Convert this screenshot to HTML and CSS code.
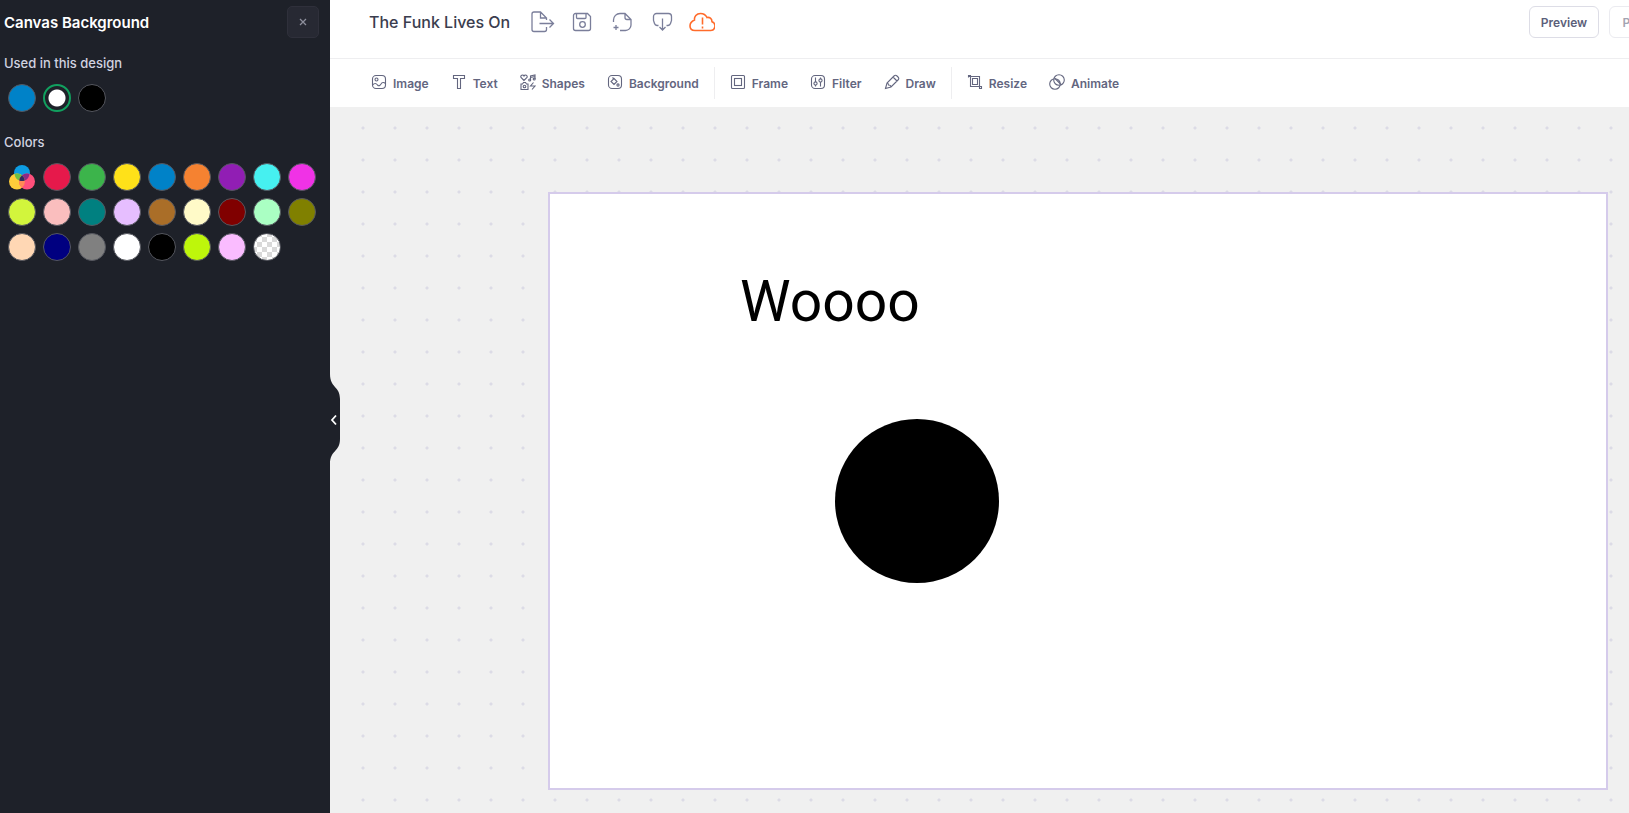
FILE: index.html
```html
<!DOCTYPE html>
<html lang="en">
<head>
<meta charset="UTF-8">
<meta name="viewport" content="width=device-width, initial-scale=1.0">
<title>The Funk Lives On</title>
<link rel="stylesheet" href="styles.css">
</head>
<body>
<div class="app">
    <aside class="sidebar">
        <div class="sidebar-header">
            <h1>Canvas Background</h1>
            <button class="close" aria-label="Close">
                <svg width="8" height="8" viewBox="0 0 8 8"><path d="M1 1l6 6M7 1L1 7"/></svg>
            </button>
        </div>
        <h2>Used in this design</h2>
        <div class="swatches used">
            <button class="swatch blue" aria-label="Blue"></button>
            <button class="swatch selected" aria-label="White"></button>
            <button class="swatch black" aria-label="Black"></button>
        </div>
        <h2>Colors</h2>
        <div class="swatches">
            <button class="picker" aria-label="Custom color">
                <svg width="28" height="28" viewBox="0 0 28 28">
                    <circle cx="14" cy="10" r="8" fill="#0d9de3"/>
                    <circle cx="9" cy="18.500" r="8" fill="#ffce3a"/>
                    <circle cx="19" cy="18.500" r="8" fill="#ff4f7b"/>
                    <path d="M6.500 10.900A8 8 0 0 1 14 12.300A8 8 0 0 0 11.200 17.400A8 8 0 0 1 6.500 10.900z" fill="#6cbf45"/>
                    <path d="M21.500 10.900A8 8 0 0 0 14 12.300A8 8 0 0 1 16.800 17.400A8 8 0 0 0 21.500 10.900z" fill="#8a2a86"/>
                    <path d="M14 12.300A8 8 0 0 1 14 24.700A8 8 0 0 1 14 12.300z" fill="#ff8a55"/>
                    <path d="M14 12.300A8 8 0 0 1 16.800 17.500A8 8 0 0 1 11.200 17.500A8 8 0 0 1 14 12.300z" fill="#2b2d63"/>
                </svg>
            </button>
            <button class="swatch red" aria-label="Red"></button>
            <button class="swatch green" aria-label="Green"></button>
            <button class="swatch yellow" aria-label="Yellow"></button>
            <button class="swatch blue" aria-label="Blue"></button>
            <button class="swatch orange" aria-label="Orange"></button>
            <button class="swatch purple" aria-label="Purple"></button>
            <button class="swatch cyan" aria-label="Cyan"></button>
            <button class="swatch magenta" aria-label="Magenta"></button>
            <button class="swatch lime" aria-label="Lime"></button>
            <button class="swatch pink" aria-label="Pink"></button>
            <button class="swatch teal" aria-label="Teal"></button>
            <button class="swatch lavender" aria-label="Lavender"></button>
            <button class="swatch brown" aria-label="Brown"></button>
            <button class="swatch beige" aria-label="Beige"></button>
            <button class="swatch maroon" aria-label="Maroon"></button>
            <button class="swatch mint" aria-label="Mint"></button>
            <button class="swatch olive" aria-label="Olive"></button>
            <button class="swatch coral" aria-label="Apricot"></button>
            <button class="swatch navy" aria-label="Navy"></button>
            <button class="swatch grey" aria-label="Grey"></button>
            <button class="swatch white" aria-label="White"></button>
            <button class="swatch black" aria-label="Black"></button>
            <button class="swatch acid" aria-label="Acid green"></button>
            <button class="swatch rose" aria-label="Rose"></button>
            <button class="swatch transparent" aria-label="Transparent"></button>
        </div>
        <button class="collapse" aria-label="Collapse panel">
            <svg width="10" height="90" viewBox="0 0 10 90">
                <path d="M0 0C0 14 10 12 10 25V65C10 78 0 76 0 90z" fill="#1e2129"/>
                <path d="M6 41.500L2 46L6 50.500" fill="none" stroke="#fff" stroke-width="1.800"/>
            </svg>
        </button>
    </aside>

    <main class="main">
        <header class="topbar">
            <span class="title">The Funk Lives On</span>
            <div class="file-actions">
                <button aria-label="Export">
                    <svg width="26" height="22" viewBox="0 0 26 22"><path d="M17.500 9V7L11.500 1H5A2 2 0 0 0 3 3V18.500A2 2 0 0 0 5 20.500H15.500A2 2 0 0 0 17.500 18.500V16M11.500 1V7H17.500M10.500 12.500H24.500M20.500 8.500L24.500 12.500L20.500 16.500"/></svg>
                </button>
                <button aria-label="Save">
                    <svg width="26" height="22" viewBox="0 0 26 22"><path d="M6.500 2.500H18.500L21.500 5.500V17.500A2 2 0 0 1 19.500 19.500H6.500A2 2 0 0 1 4.500 17.500V4.500A2 2 0 0 1 6.500 2.500zM7.500 2.500V6.500A1 1 0 0 0 8.500 7.500H16A1 1 0 0 0 17 6.500V2.500"/><circle cx="13.500" cy="13.500" r="2.800"/></svg>
                </button>
                <button aria-label="New version">
                    <svg width="26" height="22" viewBox="0 0 26 22"><path d="M4.500 11V9A6.500 6.500 0 0 1 11 2.500H16L22 8.500V14A5.500 5.500 0 0 1 16.500 19.500H11M16 2.500V6.500A2 2 0 0 0 18 8.500H22M7 14V19M4.500 16.500H9.500"/></svg>
                </button>
                <button aria-label="Download">
                    <svg width="26" height="22" viewBox="0 0 26 22"><path d="M9.500 14.500H8A3 3 0 0 1 5.500 12.500L4.500 9.500V5.500A3 3 0 0 1 7.500 2.500H19.500A3 3 0 0 1 22.500 5.500V9.500L21.500 12.500A3 3 0 0 1 19 14.500H17.500M13.500 7.500V19M10.500 16L13.500 19L16.500 16"/></svg>
                </button>
                <button class="warning" aria-label="Not saved">
                    <svg width="26" height="22" viewBox="0 0 26 22"><path d="M6 19.500H21A4.500 4.500 0 0 0 23 10.800C23 7.500 20.500 6 18 6.500C16.500 3.500 14 2.500 11.500 2.500C7.500 2.500 5 5.500 5.500 9C2 10.500 1 13 1 15C1 18 3 19.500 6 19.500z M13.500 6.500V13.500M13.500 15.500V17.500"/></svg>
                </button>
            </div>
            <div class="actions">
                <button>Preview</button>
                <button disabled>Publish</button>
            </div>
        </header>

        <nav class="toolbar">
            <div class="group">
                <button><svg width="16" height="16" viewBox="0 0 16 16"><rect x="1.500" y="1.500" width="13" height="13" rx="3.500"/><circle cx="5.500" cy="5.500" r="1.500"/><path d="M1.500 11C3.500 9 5 9 6.500 11C8 12.500 9 11.500 10 10C11 8 13 8 14.500 9.500"/></svg>Image</button>
                <button><svg width="16" height="16" viewBox="0 0 16 16"><path d="M2.500 1.500H13.500V4.500H9.500V14.500H6.500V4.500H2.500z"/></svg>Text</button>
                <button><svg width="16" height="16" viewBox="0 0 16 16"><path d="M4 6.500L1 3.500C0 1.500 3 0 4 2C5 0 8 1.500 7 3.500zM10.500 6V2L15 1V5M10.500 3.500L15 2.500M1 10H2.500L3.500 8.500H5.500L6.500 10H8V15.500H1zM13.500 8.500L10.500 12H15L12 15.500"/><circle cx="9.700" cy="6" r="1"/><circle cx="14.200" cy="5" r="1"/><circle cx="4.500" cy="12.500" r="1.300"/></svg>Shapes</button>
                <button><svg width="16" height="16" viewBox="0 0 16 16"><rect x="1.500" y="1.500" width="13" height="13" rx="3.500"/><path d="M7 4.500L10 7.500L7 10.500L4 7.500zM5.500 3.500L7 5"/><circle cx="11" cy="11" r="1.100"/></svg>Background</button>
            </div>
            <div class="group">
                <button><svg width="16" height="16" viewBox="0 0 16 16"><rect x="1.500" y="1.500" width="13" height="13" rx="1"/><rect x="4.500" y="4.500" width="7" height="7"/></svg>Frame</button>
                <button><svg width="16" height="16" viewBox="0 0 16 16"><rect x="1.500" y="1.500" width="13" height="13" rx="3.500"/><circle cx="5.500" cy="9.500" r="1.600"/><circle cx="10.500" cy="6.500" r="1.600"/><path d="M5.500 3.500V8M5.500 11V12.500M10.500 3.500V5M10.500 8V12.500"/></svg>Filter</button>
                <button><svg width="16" height="16" viewBox="0 0 16 16"><path d="M1.500 14.500L3 9L10 2C11 1 12 1 13 2L14 3C15 4 15 5 14 6L7 13zM3 9C4 9 4.500 10 4.500 11C6 11 7 12 7 13M9 3L13 7"/></svg>Draw</button>
            </div>
            <div class="group">
                <button><svg width="16" height="16" viewBox="0 0 16 16"><path d="M1.500 3.500V1.500H3.500V12.500H14.500V14.500H12.500V2.500H1.500M5.500 4.500H10.500V10.500H5.500z"/></svg>Resize</button>
                <button><svg width="16" height="16" viewBox="0 0 16 16"><circle cx="10" cy="6" r="5.300"/><circle cx="6" cy="10" r="5.300"/><path d="M6 4.500L11.500 10"/></svg>Animate</button>
            </div>
        </nav>

        <section class="workspace">
            <div class="artboard">
                <span class="art-text">Woooo</span>
                <div class="art-circle"></div>
            </div>
        </section>
    </main>
</div>
</body>
</html>
```
FILE: styles.css
```css
* {
    box-sizing: border-box;
}
body {
    margin: 0;
    font-family: Inter, "Liberation Sans", sans-serif;
    background-color: #f0f0f0;
}
button {
    font-family: inherit;
    padding: 0;
    border: none;
    background: none;
    cursor: pointer;
}
svg {
    display: block;
    flex-shrink: 0;
}
.app {
    display: flex;
    min-height: 100vh;
}

/* left panel */
.sidebar {
    position: relative;
    flex: 0 0 330px;
    padding: 6px 11px 0 4px;
    background-color: #1e2129;
}
.sidebar-header {
    display: flex;
    justify-content: space-between;
    align-items: center;
    margin-bottom: 15px;
}
h1 {
    margin: 0;
    font-size: 15px;
    font-weight: 600;
    color: #fff;
}
h2 {
    margin: 0 0 11px;
    font-size: 13px;
    line-height: 20px;
    font-weight: 500;
    color: #d1d3e0;
}
.close {
    display: flex;
    justify-content: center;
    align-items: center;
    width: 32px;
    height: 32px;
    border: 1px solid #2f303b;
    border-radius: 5px;
    background-color: #272933;
}
.close svg {
    stroke: #8d8f9c;
    stroke-width: 1.3;
}
.swatches {
    display: grid;
    grid-template-columns: repeat(9, 28px);
    gap: 7px;
    padding-left: 4px;
}
.used {
    margin-bottom: 20px;
}
.swatch {
    width: 28px;
    height: 28px;
    border: 1px solid #55575f;
    border-radius: 50%;
}
.selected {
    border: 2px solid #11a05f;
    background: radial-gradient(circle, #fff 8px, transparent 9px);
}
.red { background-color: #e6194b; }
.green { background-color: #3cb44b; }
.yellow { background-color: #ffe119; }
.blue { background-color: #0082c8; }
.orange { background-color: #f58231; }
.purple { background-color: #911eb4; }
.cyan { background-color: #46f0f0; }
.magenta { background-color: #f032e6; }
.lime { background-color: #d2f53c; }
.pink { background-color: #fabebe; }
.teal { background-color: #008080; }
.lavender { background-color: #e6beff; }
.brown { background-color: #aa6e28; }
.beige { background-color: #fffac8; }
.maroon { background-color: #800000; }
.mint { background-color: #aaffc3; }
.olive { background-color: #808000; }
.coral { background-color: #ffd7b4; }
.navy { background-color: #000080; }
.grey { background-color: #808080; }
.white { background-color: #fff; }
.black { background-color: #000; }
.acid { background-color: #bef60b; }
.rose { background-color: #fabcff; }
.transparent {
    background: repeating-conic-gradient(#d9d9d9 0 25%, #fff 0 50%) 3px 3px / 10px 10px;
}
.collapse {
    position: absolute;
    left: 100%;
    top: 46%;
}

/* header */
.main {
    flex: 1;
    min-width: 0;
    display: flex;
    flex-direction: column;
    overflow: hidden;
}
.topbar {
    display: flex;
    padding: 6px 0 20px 39px;
    border-bottom: 1px solid #eeeef0;
    background-color: #fff;
}
.title {
    margin-right: 19px;
    font-size: 16px;
    line-height: 32px;
    font-weight: 500;
    color: #3a3d4e;
    white-space: nowrap;
}
.file-actions {
    display: flex;
    align-items: center;
    gap: 14px;
    height: 32px;
}
.file-actions svg,
.toolbar svg {
    fill: none;
    stroke: #7a7e9a;
    stroke-width: 1.3;
}
.file-actions .warning svg {
    stroke: #ff6b2b;
    stroke-width: 1.6;
}
.actions {
    display: flex;
    gap: 10px;
    width: 100px;
    margin-left: auto;
}
.actions button {
    flex: 0 0 70px;
    height: 32px;
    border: 1px solid #dddde6;
    border-radius: 6px;
    font-size: 12px;
    font-weight: 600;
    color: #5c5f7a;
}
.actions button:disabled {
    color: #a3a4b2;
    border-color: #ebebf0;
}

.toolbar {
    display: flex;
    padding: 8px 0 8px 26px;
    background-color: #fff;
}
.group {
    display: flex;
    gap: 22px;
    height: 32px;
    padding: 0 15px;
}
.group + .group {
    border-left: 1px solid #eeeef0;
}
.toolbar button {
    display: flex;
    align-items: center;
    gap: 6px;
    padding-top: 2px;
    font-size: 12px;
    line-height: 20px;
    font-weight: 600;
    color: #63667f;
}
.toolbar svg {
    stroke: #63667f;
    stroke-width: 1.1;
    margin-bottom: 4px;
}

/* drawing area */
.workspace {
    flex: 1;
    display: flex;
    padding: 85px 21px 23px 218px;
    background:
        linear-gradient(#f0f0f0, #f0f0f0) left / 20px 100% no-repeat,
        radial-gradient(circle at 16px 16px, #dcdbe6 1px, transparent 2px) 17px 5px / 32px 32px #f0f0f0;
}
.artboard {
    position: relative;
    flex: 1;
    border: 2px solid #d5cbeb;
    background-color: #fff;
}
.art-text {
    position: absolute;
    left: 190px;
    top: 74px;
    font-family: Roboto, sans-serif;
    font-size: 57px;
    line-height: 68px;
    color: #000;
}
.art-circle {
    position: absolute;
    left: 285px;
    top: 225px;
    width: 164px;
    height: 164px;
    border-radius: 50%;
    background-color: #000;
}
```
